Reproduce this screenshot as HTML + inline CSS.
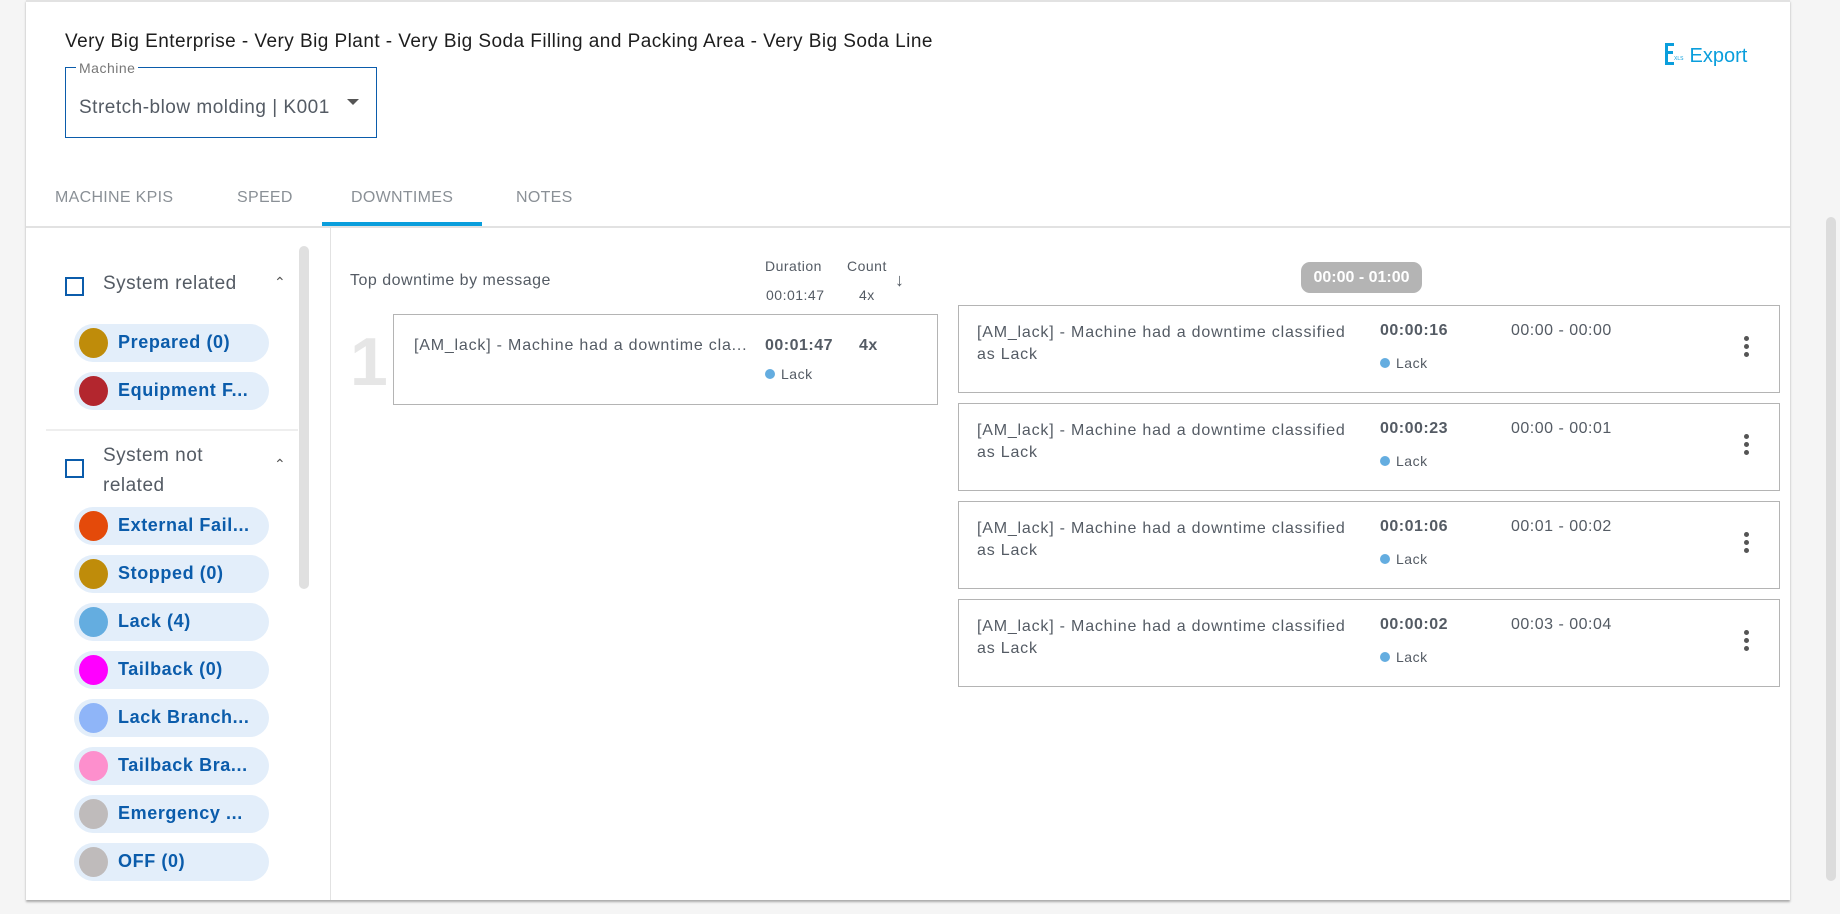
<!DOCTYPE html>
<html><head><meta charset="utf-8"><style>
*{box-sizing:border-box;margin:0;padding:0}
body{width:1840px;height:914px;background:#f5f5f5;font-family:"Liberation Sans",sans-serif;color:#545b64;position:relative;overflow:hidden;letter-spacing:.5px}
.abs{position:absolute}
#card{left:26px;top:0;width:1764px;height:900px;background:#fff;border-top:2px solid #e2e2e2;box-shadow:0 2px 2px #aaa}
.title{left:65px;top:31px;font-size:19px;color:#1d1d1d;white-space:nowrap;letter-spacing:.45px}
.sel{left:65px;top:67px;width:312px;height:71px;border:1px solid #0b5cab}
.sel .lab{position:absolute;left:10px;top:-8px;background:#fff;padding:0 3px;font-size:14px;color:#777}
.sel .val{position:absolute;left:13px;top:29px;font-size:19px;color:#545b64}
.sel .arr{position:absolute;left:281px;top:31px;width:0;height:0;border-left:6px solid transparent;border-right:6px solid transparent;border-top:6px solid #555}
.exp{left:1664px;top:42px;font-size:20px;color:#0a9edc;letter-spacing:0}
.tab{top:189px;font-size:16px;color:#8a9096;letter-spacing:.3px}
.hr{left:26px;top:226px;width:1764px;height:2px;background:#e2e2e2}
.ul{left:322px;top:222px;width:160px;height:4px;background:#0a9edc}
.vr{left:330px;top:228px;width:1px;height:672px;background:#e2e2e2}
.cb{width:19px;height:19px;border:2px solid #0b5cab}
.grp{font-size:19px;color:#545b64}
.chev{font-size:14px;color:#555}
.chip{left:74px;width:195px;height:38px;border-radius:19px;background:#e3eefa;color:#0b5cab;font-weight:bold;font-size:18px;white-space:nowrap;letter-spacing:.6px}
.chip i{position:absolute;left:5px;top:4px;width:29px;height:30px;border-radius:50%}
.chip span{position:absolute;left:44px;top:8px}
.sb{left:299px;top:246px;width:10px;height:343px;border-radius:5px;background:#e0e0e0}
.box{border:1px solid #b4b4b4;background:#fff}
.msg{letter-spacing:.8px}
.dot{display:inline-block;width:10px;height:10px;border-radius:50%;background:#64ade0;margin-right:6px}
.kb{position:absolute;width:5px;height:5px;border-radius:50%;background:#555}
</style></head><body>
<div id="card" class="abs"></div>
<div class="abs title">Very Big Enterprise - Very Big Plant - Very Big Soda Filling and Packing Area - Very Big Soda Line</div>
<div class="abs sel"><div class="lab">Machine</div><div class="val">Stretch-blow molding | K001</div><div class="arr"></div></div>
<div class="abs exp"><svg width="20" height="24" style="vertical-align:-4px" viewBox="0 0 20 24"><path d="M1 1h9v3H4v5h5v3H4v8h6v3H1z" fill="#0a9edc"/><text x="10" y="18" font-size="5" fill="#0a9edc" font-family="Liberation Sans">XLS</text></svg> Export</div>
<div class="abs tab" style="left:55px">MACHINE KPIS</div>
<div class="abs tab" style="left:237px">SPEED</div>
<div class="abs tab" style="left:351px">DOWNTIMES</div>
<div class="abs tab" style="left:516px">NOTES</div>
<div class="abs hr"></div><div class="abs ul"></div><div class="abs vr"></div>

<div class="abs cb" style="left:65px;top:277px"></div>
<div class="abs grp" style="left:103px;top:273px">System related</div>
<div class="abs chev" style="left:274px;top:274px">&#8963;</div>
<div class="abs chip" style="top:324px"><i style="background:#bf8c0a"></i><span>Prepared (0)</span></div>
<div class="abs chip" style="top:372px"><i style="background:#b3262e"></i><span>Equipment F...</span></div>
<div class="abs" style="left:46px;top:429px;width:252px;height:2px;background:#eee"></div>
<div class="abs cb" style="left:65px;top:459px"></div>
<div class="abs grp" style="left:103px;top:441px;line-height:30px">System not<br>related</div>
<div class="abs chev" style="left:274px;top:456px">&#8963;</div>
<div class="abs chip" style="top:507px"><i style="background:#e44a0a"></i><span>External Fail...</span></div>
<div class="abs chip" style="top:555px"><i style="background:#bf8c0a"></i><span>Stopped (0)</span></div>
<div class="abs chip" style="top:603px"><i style="background:#64ade0"></i><span>Lack (4)</span></div>
<div class="abs chip" style="top:651px"><i style="background:#f0f"></i><span>Tailback (0)</span></div>
<div class="abs chip" style="top:699px"><i style="background:#8fb5f8"></i><span>Lack Branch...</span></div>
<div class="abs chip" style="top:747px"><i style="background:#fd8fcd"></i><span>Tailback Bra...</span></div>
<div class="abs chip" style="top:795px"><i style="background:#bfbbbb"></i><span>Emergency ...</span></div>
<div class="abs chip" style="top:843px"><i style="background:#bfbbbb"></i><span>OFF (0)</span></div>
<div class="abs sb"></div>

<div class="abs" style="left:350px;top:272px;font-size:16px">Top downtime by message</div>
<div class="abs" style="left:765px;top:258px;font-size:14px">Duration</div>
<div class="abs" style="left:847px;top:258px;font-size:14px">Count</div>
<div class="abs" style="left:766px;top:287px;font-size:14px">00:01:47</div>
<div class="abs" style="left:859px;top:287px;font-size:14px">4x</div>
<div class="abs" style="left:895px;top:270px;font-size:18px">&#8595;</div>
<div class="abs" style="left:350px;top:328px;font-size:68px;font-weight:bold;color:#e6e6e6;line-height:1">1</div>
<div class="abs box" style="left:393px;top:314px;width:545px;height:91px">
<div class="abs msg" style="left:20px;top:22px;font-size:16px;white-space:nowrap">[AM_lack] - Machine had a downtime cla...</div>
<div class="abs" style="left:371px;top:22px;font-size:16px;font-weight:bold">00:01:47</div>
<div class="abs" style="left:465px;top:22px;font-size:16px;font-weight:bold">4x</div>
<div class="abs" style="left:371px;top:51px;font-size:14px"><span class="dot"></span>Lack</div>
</div>

<div class="abs" style="left:1301px;top:262px;width:121px;height:31px;border-radius:9px;background:#b4b4b4;color:#fff;font-weight:bold;font-size:16px;text-align:center;line-height:31px;letter-spacing:0">00:00 - 01:00</div>

<div class="abs box" style="left:958px;top:305px;width:822px;height:88px">
<div class="abs msg" style="left:18px;top:16px;font-size:16px;line-height:22px">[AM_lack] - Machine had a downtime classified<br>as Lack</div>
<div class="abs" style="left:421px;top:16px;font-size:16px;font-weight:bold">00:00:16</div>
<div class="abs" style="left:552px;top:16px;font-size:16px">00:00 - 00:00</div>
<div class="abs" style="left:421px;top:49px;font-size:14px"><span class="dot"></span>Lack</div>
<div class="kb" style="left:785px;top:30px"></div><div class="kb" style="left:785px;top:38px"></div><div class="kb" style="left:785px;top:46px"></div>
</div>
<div class="abs box" style="left:958px;top:403px;width:822px;height:88px">
<div class="abs msg" style="left:18px;top:16px;font-size:16px;line-height:22px">[AM_lack] - Machine had a downtime classified<br>as Lack</div>
<div class="abs" style="left:421px;top:16px;font-size:16px;font-weight:bold">00:00:23</div>
<div class="abs" style="left:552px;top:16px;font-size:16px">00:00 - 00:01</div>
<div class="abs" style="left:421px;top:49px;font-size:14px"><span class="dot"></span>Lack</div>
<div class="kb" style="left:785px;top:30px"></div><div class="kb" style="left:785px;top:38px"></div><div class="kb" style="left:785px;top:46px"></div>
</div>
<div class="abs box" style="left:958px;top:501px;width:822px;height:88px">
<div class="abs msg" style="left:18px;top:16px;font-size:16px;line-height:22px">[AM_lack] - Machine had a downtime classified<br>as Lack</div>
<div class="abs" style="left:421px;top:16px;font-size:16px;font-weight:bold">00:01:06</div>
<div class="abs" style="left:552px;top:16px;font-size:16px">00:01 - 00:02</div>
<div class="abs" style="left:421px;top:49px;font-size:14px"><span class="dot"></span>Lack</div>
<div class="kb" style="left:785px;top:30px"></div><div class="kb" style="left:785px;top:38px"></div><div class="kb" style="left:785px;top:46px"></div>
</div>
<div class="abs box" style="left:958px;top:599px;width:822px;height:88px">
<div class="abs msg" style="left:18px;top:16px;font-size:16px;line-height:22px">[AM_lack] - Machine had a downtime classified<br>as Lack</div>
<div class="abs" style="left:421px;top:16px;font-size:16px;font-weight:bold">00:00:02</div>
<div class="abs" style="left:552px;top:16px;font-size:16px">00:03 - 00:04</div>
<div class="abs" style="left:421px;top:49px;font-size:14px"><span class="dot"></span>Lack</div>
<div class="kb" style="left:785px;top:30px"></div><div class="kb" style="left:785px;top:38px"></div><div class="kb" style="left:785px;top:46px"></div>
</div>

<div class="abs" style="left:1826px;top:217px;width:10px;height:664px;border-radius:5px;background:#dcdcdc"></div>
</body></html>
